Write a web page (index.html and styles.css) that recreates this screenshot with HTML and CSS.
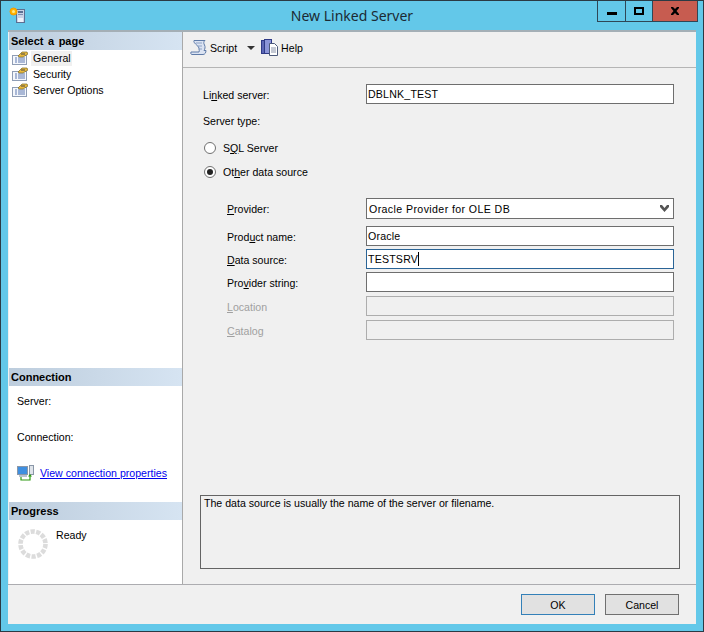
FILE: index.html
```html
<!DOCTYPE html>
<html lang="en">
<head>
<meta charset="utf-8">
<title>New Linked Server</title>
<link rel="stylesheet" href="styles.css">
</head>
<body>
<div class="window">
  <header class="titlebar">
    <div class="title-left">
      <svg class="app-icon" width="17" height="17" viewBox="0 0 17 17">
        <rect x="7.500" y="2.500" width="8" height="13" fill="#c9d3e6" stroke="#5c6f92"/>
        <rect x="9" y="4" width="5" height="2" fill="#5c6f92"/>
        <rect x="9" y="7" width="5" height="1" fill="#7d8db0"/>
        <rect x="9" y="11" width="5" height="4" fill="#eef2fa"/>
        <circle cx="4.500" cy="4.500" r="3.500" fill="#ffb400" stroke="#f59a00"/>
        <circle cx="4.500" cy="4.500" r="1.500" fill="#ffe98a"/>
      </svg>
    </div>
    <div class="title-text">New Linked Server</div>
    <div class="title-right">
      <div class="winbtns">
        <div class="winbtn min"><span class="min-glyph"></span></div>
        <div class="winbtn max"><span class="max-glyph"></span></div>
        <div class="winbtn close">
          <svg width="10" height="8" viewBox="0 0 10 8"><path d="M1 0h2l2 2 2-2h2v1L6.500 4 9 7v1H7L5 6 3 8H1V7l2.500-3L1 1z" fill="#000"/></svg>
        </div>
      </div>
    </div>
  </header>
  <div class="client">
    <div class="main">
      <aside class="side">
        <section class="side-pages">
          <h2 class="side-head">Select a page</h2>
          <ul class="pages">
            <li class="page"><svg class="page-icon" width="16" height="14" viewBox="0 0 16 14"><use href="#pg"/></svg><span class="page-label active">General</span></li>
            <li class="page"><svg class="page-icon" width="16" height="14" viewBox="0 0 16 14"><use href="#pg"/></svg><span class="page-label">Security</span></li>
            <li class="page"><svg class="page-icon" width="16" height="14" viewBox="0 0 16 14"><use href="#pg"/></svg><span class="page-label">Server Options</span></li>
          </ul>
        </section>
        <section class="side-conn">
          <h2 class="side-head">Connection</h2>
          <div class="conn-body">
            <div class="conn-line">Server:</div>
            <div class="conn-line">Connection:</div>
            <div class="conn-link">
              <svg width="18" height="16" viewBox="0 0 18 16">
                <rect x="0.500" y="1.500" width="10" height="8" fill="#3f8fe0" stroke="#8a97a8"/>
                <rect x="2" y="10" width="8" height="2" fill="#b8c2cf"/>
                <rect x="12.500" y="0.500" width="4" height="9" fill="#dfe4ea" stroke="#8a97a8"/>
                <path d="M4 12v3h9v-4" fill="none" stroke="#2e9a12" stroke-width="1.200"/>
                <path d="M11 11.500l2-2.500 2 2.500z" fill="#2e9a12"/>
              </svg>
              <a class="link" href="#">View connection properties</a>
            </div>
          </div>
        </section>
        <section class="side-prog">
          <h2 class="side-head">Progress</h2>
          <div class="prog-body">
            <svg class="spinner" width="30" height="30" viewBox="0 0 30 30">
              <circle cx="15" cy="15" r="12.500" fill="none" stroke="#dcdcdc" stroke-width="4.600" stroke-dasharray="4.200 1.410"/>
            </svg>
            <span class="ready">Ready</span>
          </div>
        </section>
      </aside>
      <main class="content">
        <div class="toolbar">
          <div class="tool">
            <svg width="17" height="17" viewBox="0 0 17 17">
              <path d="M4 1.500h11c-1.500 1-1.500 3 -.5 4.500 1 2 .5 4-.5 5.500h2c0 2-1 4-3 4H2c-1 0-1.500-1-1-2.500h8c.5-2 .5-3-.5-5S3 4 4 1.500z" fill="#dbe3f2" stroke="#5f7ba8"/>
              <path d="M6 4h6M7 7h5M8 10h4" stroke="#8ea3c6"/>
            </svg>
            <span>Script</span>
          </div>
          <span class="caret"></span>
          <div class="tool">
            <svg width="17" height="17" viewBox="0 0 17 17">
              <rect x="0.500" y="1.500" width="7" height="13" fill="#5b66b5" stroke="#2f3a86"/>
              <rect x="3.500" y="0.500" width="7" height="14" fill="#8b95d8" stroke="#2f3a86"/>
              <path d="M8.500 4.500h5l3 3v9h-8z" fill="#fff" stroke="#4d5a7a"/>
              <path d="M10 9h5M10 11h5M10 13h5" stroke="#8a93a8"/>
            </svg>
            <span>Help</span>
          </div>
        </div>
        <form class="form">
          <div class="row row-linked">
            <label class="lbl">Li<u>n</u>ked server:</label>
            <div class="field">DBLNK_TEST</div>
          </div>
          <div class="server-type">Server type:</div>
          <div class="radio-row"><span class="radio"></span><span>S<u>Q</u>L Server</span></div>
          <div class="radio-row"><span class="radio on"></span><span>Ot<u>h</u>er data source</span></div>
          <div class="sub">
            <div class="row row-provider">
              <label class="lbl"><u>P</u>rovider:</label>
              <div class="field select">
                <span>Oracle Provider for OLE DB</span>
                <svg width="9" height="7" viewBox="0 0 9 7"><path d="M0 0l2 0 2.500 3L7 0l2 0v2L4.500 7 0 2z" fill="#555"/></svg>
              </div>
            </div>
            <div class="row row-product">
              <label class="lbl">Prod<u>u</u>ct name:</label>
              <div class="field">Oracle</div>
            </div>
            <div class="row row-tight">
              <label class="lbl"><u>D</u>ata source:</label>
              <div class="field focus">TESTSRV<span class="cursor"></span></div>
            </div>
            <div class="row row-tight">
              <label class="lbl">Pro<u>v</u>ider string:</label>
              <div class="field"></div>
            </div>
            <div class="row row-tight off">
              <label class="lbl"><u>L</u>ocation</label>
              <div class="field"></div>
            </div>
            <div class="row row-tight off">
              <label class="lbl"><u>C</u>atalog</label>
              <div class="field"></div>
            </div>
          </div>
          <div class="desc">The data source is usually the name of the server or filename.</div>
        </form>
      </main>
    </div>
    <footer class="footer">
      <button class="btn default" type="button">OK</button>
      <button class="btn" type="button">Cancel</button>
    </footer>
  </div>
</div>
<svg class="defs" width="0" height="0">
  <defs>
    <g id="pg">
      <rect x="0.500" y="4.500" width="14" height="9" fill="#f4f7fc" stroke="#8f9db5"/>
      <path d="M3 7h2M6 7h7M3 9h2M6 9h7M3 11h2M6 11h7" stroke="#5f78b0"/>
      <path d="M6 5l4-4 5 0 1 2-5 3H7z" fill="#e9b93c" stroke="#7a6a2c" stroke-width="0.700"/>
      <path d="M9 3h4" stroke="#4a4a4a"/>
    </g>
  </defs>
</svg>
</body>
</html>
```

FILE: styles.css
```css
* { box-sizing: border-box; }
html, body { margin: 0; padding: 0; }
body {
  width: 704px;
  height: 632px;
  font-family: "Liberation Sans", Arial, sans-serif;
  font-size: 10.600px;
  color: #000;
  overflow: hidden;
}
.window {
  width: 704px;
  height: 632px;
  background: #63c8e9;
  border: 1px solid #2b3a44;
  display: flex;
  flex-direction: column;
  padding: 0 7px 7px 7px;
}
.titlebar {
  height: 29px;
  display: grid;
  grid-template-columns: 1fr auto 1fr;
  flex: none;
}
.title-left { padding: 6px 0 0 1px; }
.app-icon { display: block; }
.title-text {
  font-family: "Noto Sans", sans-serif;
  font-size: 14px;
  line-height: 29px;
  color: #1c2a33;
}
.title-right { display: flex; justify-content: flex-end; }
.winbtns {
  display: flex;
  height: 21px;
  margin-right: -2px;
  border: 1px solid #2f4656;
  border-top: 0;
}
.winbtn { display: flex; align-items: center; justify-content: center; }
.min { width: 28px; border-right: 1px solid #2f4656; }
.max { width: 27px; border-right: 1px solid #2f4656; }
.close { width: 44px; background: #c75c50; }
.min-glyph { width: 10px; height: 3px; background: #000; margin-top: 5px; }
.max-glyph { width: 10px; height: 8px; border: 2px solid #000; }
.client {
  flex: 1;
  min-height: 0;
  background: #f0f0f0;
  border-top: 2px solid #a4afb6;
  display: flex;
  flex-direction: column;
}
.main {
  flex: 1;
  min-height: 0;
  display: flex;
  border-bottom: 1px solid #acacb0;
}
.side {
  width: 174px;
  flex: none;
  margin-left: 1px;
  background: #fff;
  border-right: 1px solid #a9a9a9;
  display: flex;
  flex-direction: column;
}
.side-head {
  margin: 0;
  height: 18px;
  padding-left: 2px;
  font-size: 11px;
  line-height: 18px;
  font-weight: bold;
  word-spacing: 1.500px;
  background: linear-gradient(90deg, #bdcddd, #d6e4f2);
}
.side-pages { height: 336px; flex: none; }
.pages { list-style: none; margin: 0; padding: 0; }
.page { height: 16px; display: flex; align-items: center; padding-left: 3px; }
.page-icon { flex: none; margin-right: 3px; }
.page-label { line-height: 15px; padding: 0 1px 0 2px; }
.active { background: #f0f0f0; }
.side-conn { height: 134px; flex: none; }
.conn-body { padding-left: 8px; }
.conn-line { height: 36px; line-height: 14px; padding-top: 8px; }
.conn-link { display: flex; align-items: center; gap: 5px; margin-top: 7px; }
.link { color: #0000ee; text-decoration: underline; }
.prog-body { display: flex; padding: 9px 0 0 9px; gap: 8px; }
.spinner { flex: none; }
.ready { line-height: 14px; margin-top: -1px; }
.content {
  flex: 1;
  min-width: 0;
  display: flex;
  flex-direction: column;
}
.toolbar {
  height: 36px;
  flex: none;
  border-bottom: 1px solid #b5b5b5;
  display: flex;
  align-items: center;
  padding: 0 0 4px 7px;
}
.tool { display: flex; align-items: center; gap: 3px; }
.caret {
  width: 0; height: 0;
  margin: 1px 6px 0 10px;
  border-left: 4px solid transparent;
  border-right: 4px solid transparent;
  border-top: 4px solid #333;
}
.form { flex: 1; min-height: 0; padding: 0 0 0 20px; display: flex; flex-direction: column; }
.row { display: flex; align-items: center; height: 20px; }
.lbl { width: 163px; flex: none; padding-top: 1px; }
.sub .lbl { width: 139px; }
.sub { padding-left: 24px; margin-top: 19px; }
.row-linked { margin-top: 16px; }
.field {
  width: 308px;
  height: 100%;
  flex: none;
  background: #fff;
  border: 1px solid #6e6e6e;
  padding-left: 1px;
  line-height: 18px;
  letter-spacing: 0.200px;
}
.select {
  display: flex;
  align-items: center;
  justify-content: space-between;
  padding: 0 4px 0 2px;
  letter-spacing: 0.400px;
}
.focus { border-color: #2a6496; }
.cursor { display: inline-block; width: 1px; height: 14px; background: #000; vertical-align: -3px; }
.server-type { margin-top: 10px; line-height: 14px; }
.radio-row { display: flex; align-items: center; gap: 7px; height: 14px; margin-top: 10px; margin-left: 1px; }
.server-type + .radio-row { margin-top: 13px; }
.radio {
  width: 12px; height: 12px;
  border-radius: 50%;
  border: 1px solid #707070;
  background: #fff;
  position: relative;
  flex: none;
}
.on::after {
  content: "";
  position: absolute;
  left: 2px; top: 2px;
  width: 6px; height: 6px;
  border-radius: 50%;
  background: #222;
}
.row-provider { height: 21px; }
.row-provider .lbl { padding-top: 0; }
.row-product { margin-top: 7px; }
.row-tight { margin-top: 3px; }
.off { margin-top: 4px; color: #a0a0a0; }
.off .field { background: #f0f0f0; border-color: #adadad; }
.desc {
  margin-top: 155px;
  margin-left: -3px;
  width: 480px;
  height: 74px;
  border: 1px solid #646464;
  padding: 0 3px;
  line-height: 14px;
}
.footer {
  height: 39px;
  flex: none;
  display: flex;
  justify-content: flex-end;
  gap: 10px;
  padding: 9px 17px 0 0;
  background: #f0f0f0;
}
.btn {
  width: 74px;
  height: 21px;
  font: inherit;
  background: #e1e1e1;
  border: 1px solid #707070;
  padding: 0;
}
.default { border-color: #3380b8; }
.defs { position: absolute; }
```
